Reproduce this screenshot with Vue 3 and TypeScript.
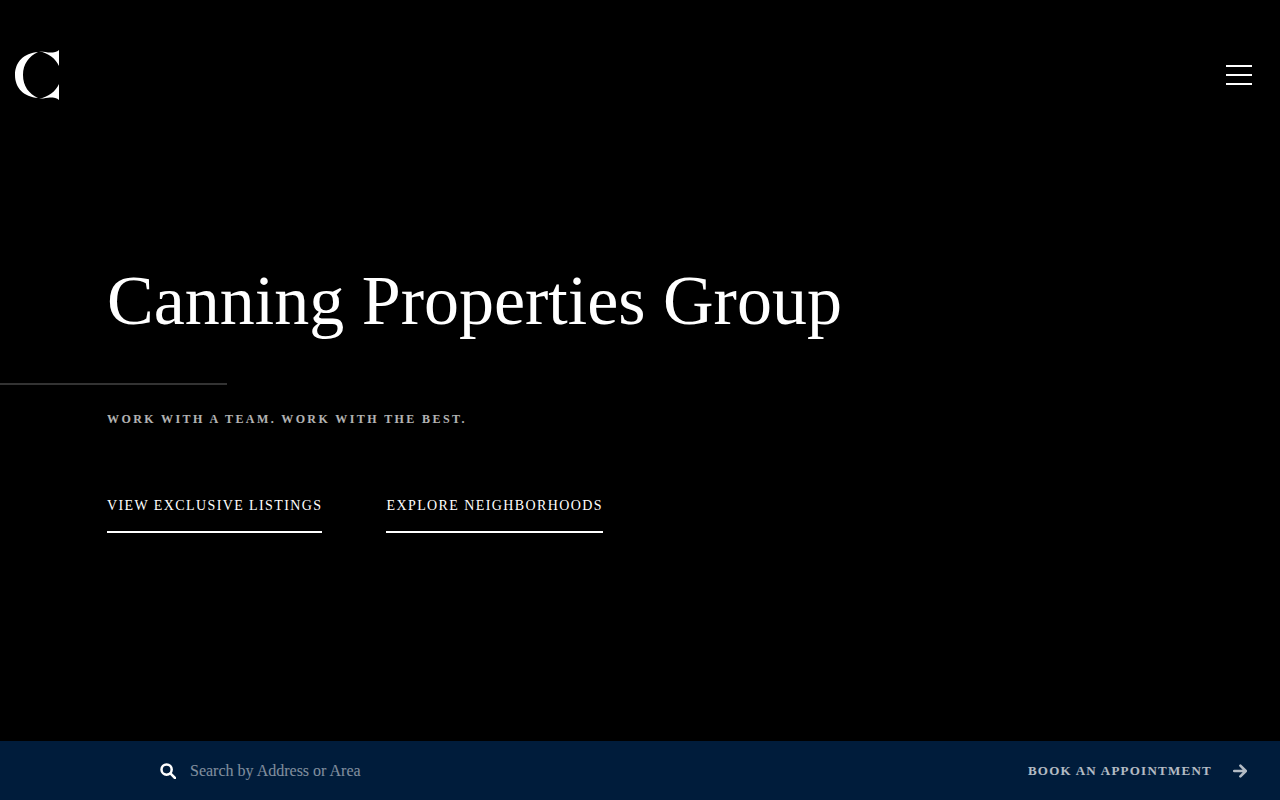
<script setup lang="ts">
const links = ['View Exclusive Listings', 'Explore Neighborhoods'];
</script>

<template>
  <div class="page">
    <header class="top">
      <a class="logo" aria-label="Canning Properties Group">
        <svg width="44" height="50" viewBox="0 0 44 50" fill="#fff">
          <path d="M23 2 C9 3 0 12 0 25 C0 38 9 47 23 48 C14 44 8 36 8 25 C8 14 14 6 23 2 Z" />
          <path d="M24 1.5 C28 1 32 2.5 35 2.5 C39 2.5 42 2 44 0 L44 16 C41 9 33 2.5 24 1.5 Z" />
          <path d="M24 48.5 C28 49 32 47.5 35 47.5 C39 47.5 42 48 44 50 L44 34 C41 41 33 47.5 24 48.5 Z" />
        </svg>
      </a>
      <button class="burger" aria-label="Menu"><span></span><span></span><span></span></button>
    </header>

    <main class="hero">
      <h1>Canning Properties Group</h1>
      <div class="rule"></div>
      <p class="tagline">Work with a team. Work with the best.</p>
      <nav class="links">
        <a v-for="link in links" :key="link">{{ link }}</a>
      </nav>
    </main>

    <footer class="bar">
      <div class="search">
        <svg width="16" height="16" viewBox="0 0 16 16" fill="none" stroke="#fff" stroke-width="2.5">
          <circle cx="6.6" cy="6.6" r="5.1" />
          <path d="M10.4 10.4 L15 15" stroke-linecap="round" />
        </svg>
        <span>Search by Address or Area</span>
      </div>
      <a class="book">
        <span>Book an appointment</span>
        <svg width="14" height="14" viewBox="0 0 14 14" fill="none" stroke="#fff" stroke-width="2.6" stroke-linecap="round" stroke-linejoin="round">
          <path d="M1.2 7 H12 M7.4 1.6 L12.8 7 L7.4 12.4" />
        </svg>
      </a>
    </footer>
  </div>
</template>

<style>
html, body {
  margin: 0;
  background: #000;
}
</style>

<style scoped>
.page {
  height: 800px;
  display: flex;
  flex-direction: column;
  background: #000;
  color: #fff;
  font-family: "Liberation Serif", serif;
  overflow: hidden;
}

.top {
  display: flex;
  justify-content: space-between;
  align-items: center;
  height: 50px;
  padding: 50px 28px 0 15px;
}

.logo {
  display: block;
  height: 50px;
}

.burger {
  display: flex;
  flex-direction: column;
  gap: 7px;
  width: 26px;
  padding: 0;
  background: none;
  border: 0;
}

.burger span {
  display: block;
  height: 2px;
  background: #fff;
}

.hero {
  flex: 1;
  padding-top: 161px;
}

h1 {
  margin: 0 0 0 107px;
  font-size: 70px;
  font-weight: 400;
  line-height: 80px;
}

.rule {
  width: 227px;
  height: 2px;
  margin-top: 42px;
  background: #333;
}

.tagline {
  margin: 26px 0 0 107px;
  font-size: 12px;
  font-weight: 700;
  line-height: 17px;
  letter-spacing: 2.4px;
  text-transform: uppercase;
  opacity: 0.7;
}

.links {
  display: flex;
  gap: 64px;
  margin: 69px 0 0 107px;
}

.links a {
  padding-bottom: 17px;
  border-bottom: 2px solid #fff;
  font-size: 14px;
  line-height: 17px;
  letter-spacing: 1.4px;
  text-transform: uppercase;
}

.bar {
  display: flex;
  justify-content: space-between;
  align-items: center;
  height: 59px;
  padding: 0 33px 0 160px;
  background: #001c3b;
}

.search {
  display: flex;
  align-items: center;
  gap: 14px;
}

.search span {
  font-size: 16px;
  opacity: 0.5;
}

.book {
  display: flex;
  align-items: center;
  gap: 21px;
}

.book span {
  font-size: 13px;
  font-weight: 700;
  letter-spacing: 1.25px;
  text-transform: uppercase;
  opacity: 0.7;
}

.book svg {
  opacity: 0.7;
}
</style>
